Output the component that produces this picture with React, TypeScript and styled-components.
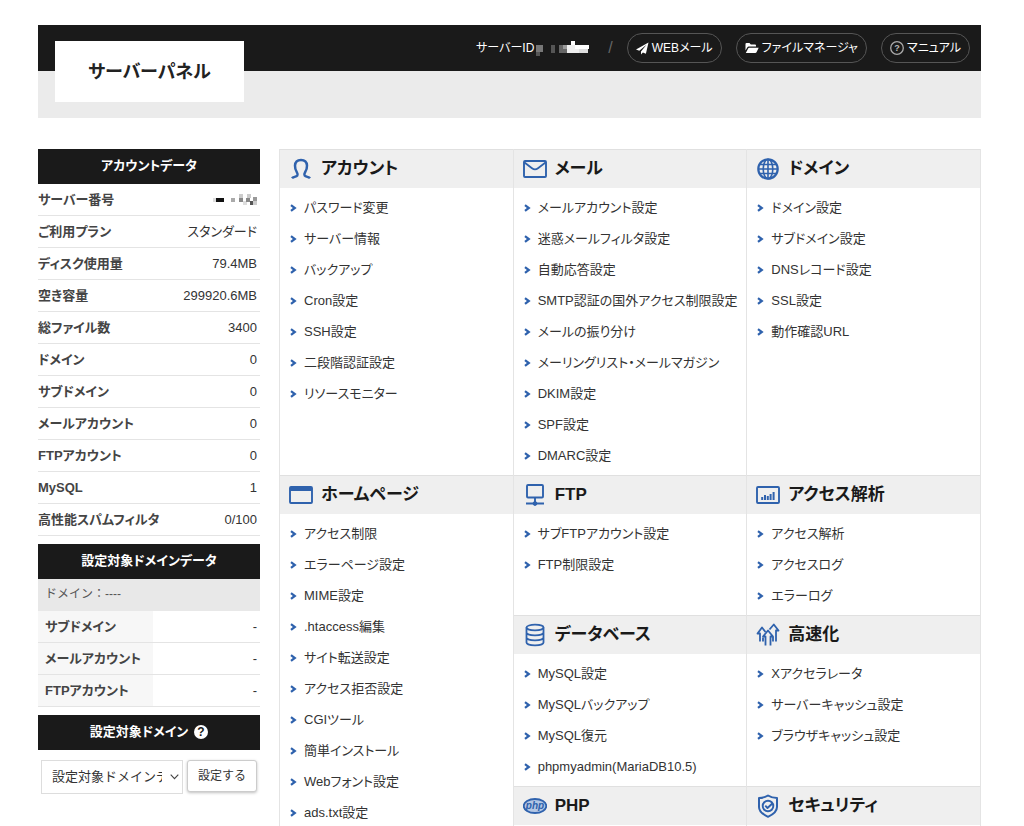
import React from 'react';
import styled, { createGlobalStyle } from 'styled-components';

const BLUE = '#2f62ad';

const GlobalStyle = createGlobalStyle`
  * { box-sizing: border-box; }
  body {
    margin: 0;
    background: #fff;
    color: #333;
    font-family: "Liberation Sans", "Noto Sans CJK JP", sans-serif;
    font-size: 13px;
    line-height: 16px;
    font-feature-settings: "palt";
  }
  button, select { font: inherit; color: inherit; }
  a { color: inherit; text-decoration: none; }
  svg { display: block; flex: none; }
`;

const Page = styled.div`
  padding: 25px 43px 0 38px;
`;

const Header = styled.header`
  position: relative;
  margin-bottom: 31px;
  padding-bottom: 47px;
  background: #ebebeb;
`;

const TopBar = styled.div`
  display: flex;
  align-items: center;
  justify-content: flex-end;
  height: 46px;
  padding-right: 11px;
  background: #1a1a1a;
  color: #fff;
  font-size: 12px;
`;

const Brand = styled.h1`
  position: absolute;
  top: 16px;
  left: 17px;
  display: flex;
  align-items: center;
  justify-content: center;
  width: 189px;
  height: 61px;
  margin: 0;
  background: #fff;
  color: #222;
  font-size: 18px;
  line-height: 24px;
`;

const ServerId = styled.div`
  display: flex;
  align-items: center;
  gap: 1px;
`;

const Slash = styled.span`
  margin: 0 14px 0 18px;
  color: #666;
  font-size: 16px;
`;

const PillNav = styled.nav`
  display: flex;
  gap: 14px;
`;

const Pill = styled.a`
  display: flex;
  align-items: center;
  gap: 3px;
  height: 30px;
  padding: 0 8px;
  border: 1px solid #555;
  border-radius: 15px;
  white-space: nowrap;
`;

const Columns = styled.div`
  display: flex;
  align-items: flex-start;
  gap: 19px;
`;

const Sidebar = styled.aside`
  flex: none;
  width: 222px;
`;

const SideBlock = styled.section`
  margin-bottom: 8px;
`;

const SideTitle = styled.h2`
  display: flex;
  align-items: center;
  justify-content: center;
  gap: 6px;
  height: 35px;
  margin: 0;
  padding-bottom: 2px;
  background: #1a1a1a;
  color: #fff;
  font-size: 13px;
`;

const DataTable = styled.table`
  width: 100%;
  border-collapse: separate;
  border-spacing: 0;
`;

const DataRow = styled.tr`
  height: 32px;
  > * { border-bottom: 1px solid #e4e4e4; }
`;

const Label = styled.th<{ $shaded?: boolean }>`
  width: ${p => (p.$shaded ? '115px' : 'auto')};
  padding: 0 0 0 ${p => (p.$shaded ? '7px' : '0')};
  background: ${p => (p.$shaded ? '#f7f7f7' : 'transparent')};
  color: #444;
  text-align: left;
  white-space: nowrap;
`;

const Value = styled.td`
  padding: 0 3px 0 0;
  text-align: right;
`;

const ValueMosaic = styled.div`
  display: flex;
  justify-content: flex-end;
`;

const CurrentDomain = styled.p`
  height: 32px;
  margin: 0;
  padding: 7px;
  background: #e8e8e8;
  color: #555;
  font-size: 12px;
  font-feature-settings: normal;
`;

const DomainForm = styled.form`
  display: flex;
  gap: 4px;
  padding: 10px 3px;
`;

const SelectWrap = styled.div`
  position: relative;
  flex: 1;
  min-width: 0;
  svg { position: absolute; top: 14px; right: 4px; pointer-events: none; }
`;

const DomainSelect = styled.select`
  appearance: none;
  width: 100%;
  height: 34px;
  padding: 0 20px 0 10px;
  border: 1px solid #ddd;
  border-radius: 0;
  background: #fff;
  font-feature-settings: normal;
`;

const SubmitButton = styled.button`
  width: 70px;
  height: 32px;
  padding: 0;
  border: 1px solid #ccc;
  border-radius: 3px;
  background: #fff;
  box-shadow: 0 1px 3px rgba(0, 0, 0, 0.25);
  font-size: 12px;
  font-feature-settings: normal;
`;

const MenuGrid = styled.main`
  display: grid;
  flex: 1;
  grid-template-columns: repeat(3, minmax(0, 1fr));
  grid-template-rows: auto auto auto 1fr;
  border-right: 1px solid #e4e4e4;
`;

const MenuCell = styled.section<{ $rows?: number }>`
  grid-row: span ${p => p.$rows ?? 1};
  border-left: 1px solid #e4e4e4;
`;

const MenuTitle = styled.h2`
  display: flex;
  align-items: center;
  gap: 8px;
  height: 39px;
  margin: 0;
  padding-left: 9px;
  border-top: 1px solid #e0e0e0;
  background: #efefef;
  color: #1a1a1a;
  font-size: 17px;
  line-height: 24px;
`;

const MenuList = styled.ul`
  margin: 0;
  padding: 4px 0;
  list-style: none;
`;

const MenuLink = styled.a`
  display: flex;
  align-items: center;
  gap: 7px;
  height: 31px;
  padding-left: 10px;
  white-space: nowrap;
`;

type IconName = 'user' | 'mail' | 'globe' | 'window' | 'ftp' | 'chart' | 'db' | 'speed' | 'php' | 'shield';

const shapes: Record<IconName, React.ReactNode> = {
  user: (
    <path d="M3 21.300c1.200-1.600 4.200-1.200 5.300-2.800.6-1 .3-2.100-.4-3.200C6.600 13.300 5.900 11 6 8.600 6.200 5.200 8.500 3 12 3s5.800 2.200 6 5.600c.1 2.400-.6 4.700-1.900 6.700-.7 1.100-1 2.200-.4 3.200 1.100 1.600 4.100 1.200 5.300 2.800" strokeWidth="2.500" />
  ),
  mail: (
    <>
      <rect x="1" y="4" width="22" height="16" rx="1" strokeWidth="1.900" />
      <path d="M1.500 5.500 9 11.300c2 1.500 4 1.500 6 0l7.500-5.800" strokeWidth="1.800" />
    </>
  ),
  globe: (
    <>
      <circle cx="12" cy="12" r="9.700" strokeWidth="2.200" />
      <path d="M12 2v20M2 12h20M3.500 7.500h17M3.500 16.500h17" strokeWidth="1.600" />
      <ellipse cx="12" cy="12" rx="4.800" ry="9.700" strokeWidth="1.600" />
    </>
  ),
  window: (
    <>
      <rect x="1" y="4" width="22" height="16" rx="1" strokeWidth="1.900" />
      <path d="M1 4h22v4H1z" fill={BLUE} stroke="none" />
    </>
  ),
  ftp: (
    <>
      <rect x="4" y="2" width="16" height="12.500" rx="1" strokeWidth="1.900" />
      <path d="M12 15v5M3 20.500h18" strokeWidth="1.900" />
      <circle cx="12" cy="20.500" r="1.900" fill={BLUE} strokeWidth="1" />
    </>
  ),
  chart: (
    <>
      <rect x="1" y="4" width="22" height="16" rx="1" strokeWidth="1.900" />
      <path d="M6.200 17v-3M9 17v-5M11.800 17v-4M14.600 17v-6M17.600 17V9" strokeWidth="2" />
    </>
  ),
  db: (
    <>
      <ellipse cx="12" cy="4.500" rx="8.500" ry="2.800" strokeWidth="1.800" />
      <path d="M3.500 4.500v15c0 1.600 3.800 2.800 8.500 2.800s8.500-1.200 8.500-2.800v-15M3.500 9.500c0 1.600 3.800 2.800 8.500 2.800s8.500-1.200 8.500-2.800M3.500 14.500c0 1.600 3.800 2.800 8.500 2.800s8.500-1.200 8.500-2.800" strokeWidth="1.800" />
    </>
  ),
  speed: (
    <>
      <path d="M9.500 22.500v-9H7l5-6 5 6h-2.500v9" strokeWidth="1.800" />
      <path d="M4 18.500v-8H1.500l4.500-6 3.500 4.500M7 18.500v-4" strokeWidth="1.800" />
      <path d="M13.500 6.500 17.800 1.500l4.700 6H20v11M17 18.500v-4.500" strokeWidth="1.800" />
    </>
  ),
  php: (
    <>
      <ellipse cx="12" cy="12" rx="11.300" ry="7" strokeWidth="1.800" fill="#b4c7e4" />
      <text x="12" y="15" textAnchor="middle" fontSize="10" fontStyle="italic" fontWeight="700" fontFamily="Liberation Sans, sans-serif" fill={BLUE} stroke="none">php</text>
    </>
  ),
  shield: (
    <>
      <path d="M12 1.500c3 2 6 2.500 9 2.500v9c0 4.500-4 7.500-9 9.800C7 20.500 3 17.500 3 13V4c3 0 6-.5 9-2.500z" strokeWidth="2" />
      <circle cx="12" cy="12" r="5.300" strokeWidth="1.900" />
      <path d="m9.300 11.700 2.200 2.300 4.800-4.500" strokeWidth="1.900" />
    </>
  ),
};

const SectionIcon = ({ name }: { name: IconName }) => (
  <svg width="24" height="24" viewBox="0 0 24 24" fill="none" stroke={BLUE} strokeLinejoin="round" aria-hidden="true">
    {shapes[name]}
  </svg>
);

const Chevron = () => (
  <svg width="7" height="8" viewBox="0 0 7 8" aria-hidden="true">
    <path d="M1 1.200 4.800 4 1 6.800" fill="none" stroke={BLUE} strokeWidth="2.200" />
  </svg>
);

const PlaneIcon = () => (
  <svg width="13" height="13" viewBox="0 0 13 13" fill="#fff" aria-hidden="true">
    <path d="M12.500.5 0 7.400l3.300 1.400L10.500 2.800 5 9.500v3l1.900-2 3 1.200z" />
  </svg>
);

const FolderIcon = () => (
  <svg width="14" height="12" viewBox="0 0 14 12" fill="#fff" aria-hidden="true">
    <path d="M.5 8.500V2q0-1 1-1h3l1.300 1.500H10q1 0 1 1v1H3.800q-1 0-1.400.8zM.8 11l2.500-4.800q.2-.5.800-.5h9.600L11.500 10.200q-.4.800-1.200.8z" />
  </svg>
);

const ManualIcon = () => (
  <svg width="14" height="14" viewBox="0 0 14 14" aria-hidden="true">
    <circle cx="7" cy="7" r="6.300" fill="none" stroke="#aaa" strokeWidth="1.300" />
    <text x="7" y="10.200" textAnchor="middle" fontSize="9" fontWeight="700" fill="#bbb">?</text>
  </svg>
);

const HelpIcon = () => (
  <svg width="14" height="14" viewBox="0 0 14 14" aria-hidden="true">
    <circle cx="7" cy="7" r="7" fill="#fff" />
    <text x="7" y="11" textAnchor="middle" fontSize="12" fontWeight="700" fill="#1a1a1a">?</text>
  </svg>
);

type Block = [x: number, y: number, w: number, h: number, color: string];

const Mosaic = ({ width, height, blocks }: { width: number; height: number; blocks: Block[] }) => (
  <svg width={width} height={height} shapeRendering="crispEdges" aria-hidden="true">
    {blocks.map(([x, y, w, h, fill], i) => (
      <rect key={i} x={x} y={y} width={w} height={h} fill={fill} />
    ))}
  </svg>
);

const idBlocks: Block[] = [
  [1, 5, 7, 7, '#777'], [1, 12, 4, 4, '#555'], [16, 5, 4, 8, '#555'], [24, 5, 8, 8, '#666'],
  [28, 5, 4, 4, '#999'], [32, 5, 13, 8, '#eee'], [36, 1, 4, 4, '#fff'], [40, 5, 14, 4, '#fff'],
  [44, 9, 9, 4, '#ddd'],
];

const numberBlocks: Block[] = [
  [1, 5, 3, 4, '#ddd'], [4, 5, 8, 4, '#111'], [19, 5, 4, 4, '#aaa'], [27, 1, 4, 4, '#ccc'],
  [27, 5, 4, 4, '#888'], [31, 8, 4, 4, '#ddd'], [35, 1, 4, 4, '#ccc'], [34, 5, 4, 4, '#888'],
  [38, 8, 4, 4, '#555'], [41, 4, 4, 4, '#999'], [41, 8, 4, 4, '#ccc'],
];

const accountData: [string, string][] = [
  ['ご利用プラン', 'スタンダード'],
  ['ディスク使用量', '79.4MB'],
  ['空き容量', '299920.6MB'],
  ['総ファイル数', '3400'],
  ['ドメイン', '0'],
  ['サブドメイン', '0'],
  ['メールアカウント', '0'],
  ['FTPアカウント', '0'],
  ['MySQL', '1'],
  ['高性能スパムフィルタ', '0/100'],
];

const domainData = ['サブドメイン', 'メールアカウント', 'FTPアカウント'];

interface Section {
  title: string;
  icon: IconName;
  rows?: number;
  items: string[];
}

const sections: Section[] = [
  { title: 'アカウント', icon: 'user', items: ['パスワード変更', 'サーバー情報', 'バックアップ', 'Cron設定', 'SSH設定', '二段階認証設定', 'リソースモニター'] },
  { title: 'メール', icon: 'mail', items: ['メールアカウント設定', '迷惑メールフィルタ設定', '自動応答設定', 'SMTP認証の国外アクセス制限設定', 'メールの振り分け', 'メーリングリスト・メールマガジン', 'DKIM設定', 'SPF設定', 'DMARC設定'] },
  { title: 'ドメイン', icon: 'globe', items: ['ドメイン設定', 'サブドメイン設定', 'DNSレコード設定', 'SSL設定', '動作確認URL'] },
  { title: 'ホームページ', icon: 'window', rows: 3, items: ['アクセス制限', 'エラーページ設定', 'MIME設定', '.htaccess編集', 'サイト転送設定', 'アクセス拒否設定', 'CGIツール', '簡単インストール', 'Webフォント設定', 'ads.txt設定'] },
  { title: 'FTP', icon: 'ftp', items: ['サブFTPアカウント設定', 'FTP制限設定'] },
  { title: 'アクセス解析', icon: 'chart', items: ['アクセス解析', 'アクセスログ', 'エラーログ'] },
  { title: 'データベース', icon: 'db', items: ['MySQL設定', 'MySQLバックアップ', 'MySQL復元', 'phpmyadmin(MariaDB10.5)'] },
  { title: '高速化', icon: 'speed', items: ['Xアクセラレータ', 'サーバーキャッシュ設定', 'ブラウザキャッシュ設定'] },
  { title: 'PHP', icon: 'php', items: [] },
  { title: 'セキュリティ', icon: 'shield', items: [] },
];

export default function App() {
  return (
    <>
      <GlobalStyle />
      <Page>
        <Header>
          <TopBar>
            <ServerId>
              サーバーID
              <Mosaic width={55} height={16} blocks={idBlocks} />
            </ServerId>
            <Slash>/</Slash>
            <PillNav>
              <Pill href="#webmail"><PlaneIcon />WEBメール</Pill>
              <Pill href="#files"><FolderIcon />ファイルマネージャ</Pill>
              <Pill href="#manual"><ManualIcon />マニュアル</Pill>
            </PillNav>
          </TopBar>
          <Brand>サーバーパネル</Brand>
        </Header>
        <Columns>
          <Sidebar>
            <SideBlock>
              <SideTitle>アカウントデータ</SideTitle>
              <DataTable>
                <tbody>
                  <DataRow>
                    <Label scope="row">サーバー番号</Label>
                    <Value>
                      <ValueMosaic><Mosaic width={45} height={14} blocks={numberBlocks} /></ValueMosaic>
                    </Value>
                  </DataRow>
                  {accountData.map(([label, value]) => (
                    <DataRow key={label}>
                      <Label scope="row">{label}</Label>
                      <Value>{value}</Value>
                    </DataRow>
                  ))}
                </tbody>
              </DataTable>
            </SideBlock>
            <SideBlock>
              <SideTitle>設定対象ドメインデータ</SideTitle>
              <CurrentDomain>ドメイン：----</CurrentDomain>
              <DataTable>
                <tbody>
                  {domainData.map(label => (
                    <DataRow key={label}>
                      <Label scope="row" $shaded>{label}</Label>
                      <Value>-</Value>
                    </DataRow>
                  ))}
                </tbody>
              </DataTable>
            </SideBlock>
            <SideBlock>
              <SideTitle>設定対象ドメイン<HelpIcon /></SideTitle>
              <DomainForm onSubmit={e => e.preventDefault()}>
                <SelectWrap>
                  <DomainSelect aria-label="設定対象ドメイン">
                    <option>設定対象ドメインデータ</option>
                  </DomainSelect>
                  <svg width="9" height="6" viewBox="0 0 9 6" aria-hidden="true">
                    <path d="M.7.700 4.500 4.700 8.300.7" fill="none" stroke="#444" strokeWidth="1.100" />
                  </svg>
                </SelectWrap>
                <SubmitButton type="submit">設定する</SubmitButton>
              </DomainForm>
            </SideBlock>
          </Sidebar>
          <MenuGrid>
            {sections.map(({ title, icon, rows, items }) => (
              <MenuCell key={title} $rows={rows}>
                <MenuTitle><SectionIcon name={icon} />{title}</MenuTitle>
                {items.length > 0 && (
                  <MenuList>
                    {items.map(item => (
                      <li key={item}>
                        <MenuLink href="#"><Chevron />{item}</MenuLink>
                      </li>
                    ))}
                  </MenuList>
                )}
              </MenuCell>
            ))}
          </MenuGrid>
        </Columns>
      </Page>
    </>
  );
}
